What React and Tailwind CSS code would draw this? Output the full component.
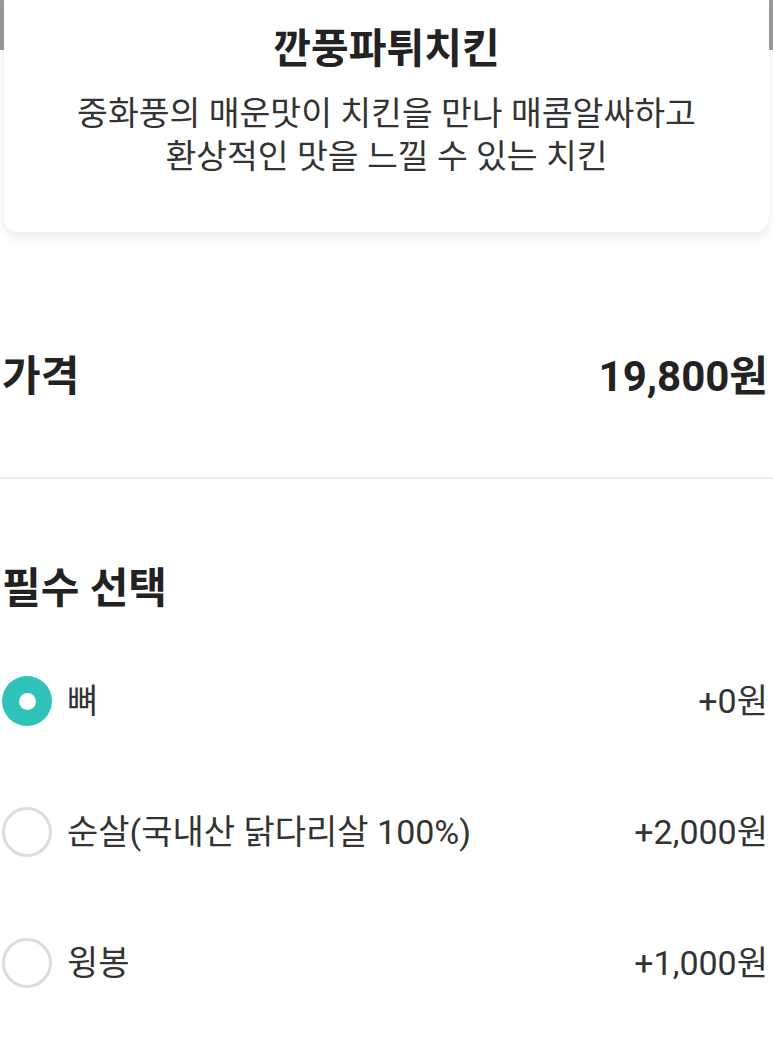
const options = [
  { label: '뼈', price: '+0원', checked: true },
  { label: '순살(국내산 닭다리살 100%)', price: '+2,000원', checked: false },
  { label: '윙봉', price: '+1,000원', checked: false },
];

function Radio({ checked }) {
  if (checked) {
    return (
      <span className="flex h-[50px] w-[50px] shrink-0 items-center justify-center rounded-full bg-[#2ec2b8]">
        <span className="h-[17px] w-[17px] rounded-full bg-white" />
      </span>
    );
  }
  return <span className="h-[50px] w-[50px] shrink-0 rounded-full border-[3px] border-[#dcdcdc]" />;
}

export default function App() {
  return (
    <div className="min-h-[1052px] bg-white text-[#222]" style={{ fontFamily: "Roboto, 'Noto Sans CJK KR', sans-serif" }}>
      {/* top image edge behind the card */}
      <div className="h-[50px] bg-[#9a9a9a]" />

      {/* menu card */}
      <div className="relative mx-[4px] -mt-[50px] rounded-b-[14px] bg-white pt-[21px] pb-[54px] text-center shadow-[0_6px_10px_rgba(0,0,0,0.08)]">
        <h1 className="text-[41px] font-bold leading-[56px]">깐풍파튀치킨</h1>
        <p className="mt-[15px] text-[33.5px] leading-[43px] text-[#333]">
          중화풍의 매운맛이 치킨을 만나 매콤알싸하고
          <br />
          환상적인 맛을 느낄 수 있는 치킨
        </p>
      </div>

      {/* price */}
      <div className="flex items-center justify-between pl-[2px] pr-[5px] pt-[120px] pb-[75px]">
        <span className="text-[42px] font-bold leading-[50px]">가격</span>
        <span className="text-[42px] font-bold leading-[50px]">19,800원</span>
      </div>
      <div className="h-[2px] bg-[#e9e9e9]" />

      {/* required options */}
      <div className="pl-[2px] pr-[5px]">
        <h2 className="pt-[85px] text-[42px] font-bold leading-[50px]">필수 선택</h2>
        <div className="mt-[62px] flex flex-col gap-[81px]">
          {options.map((o) => (
            <div key={o.label} className="flex h-[50px] items-center">
              <Radio checked={o.checked} />
              <span className="ml-[15px] flex-1 text-[34px] text-[#333]">{o.label}</span>
              <span className="text-[34px] text-[#333]">{o.price}</span>
            </div>
          ))}
        </div>
      </div>
    </div>
  );
}
